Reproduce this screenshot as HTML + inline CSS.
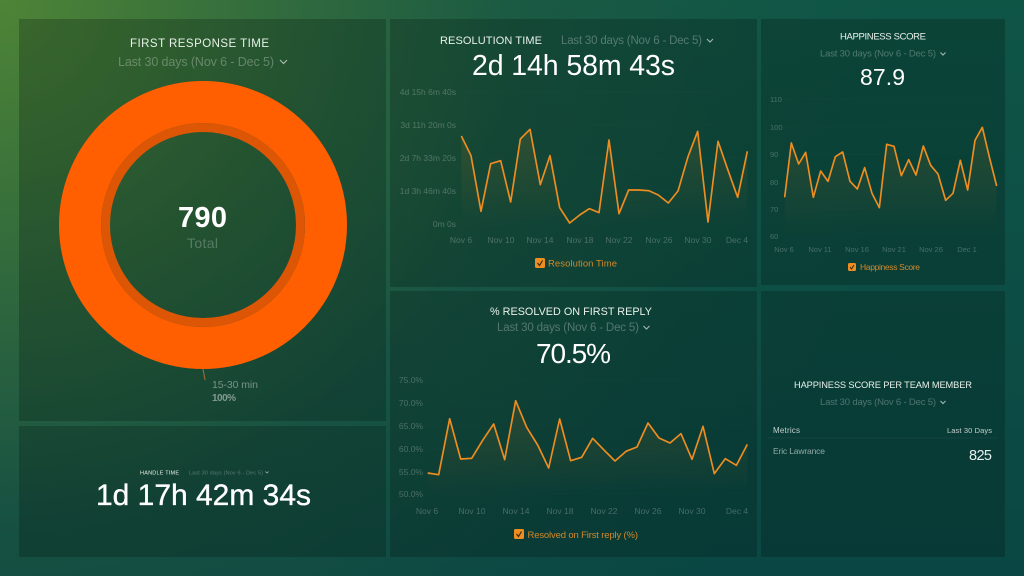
<!DOCTYPE html>
<html lang="en"><head><meta charset="utf-8"><title>Dashboard</title>
<style>
html,body{margin:0;padding:0;width:1024px;height:576px;overflow:hidden;background:#0d4541}
body{background:radial-gradient(circle at 0 0,rgba(78,132,54,1) 0,rgba(70,120,56,.6) 290px,rgba(60,105,60,.26) 520px,rgba(60,105,60,.06) 760px,rgba(60,105,60,0) 900px),linear-gradient(180deg,#0f5546,#0a4744)}
svg{display:block;font-family:"Liberation Sans",sans-serif}
svg.root{filter:blur(.25px)}
.t{fill:#e8f1ea}
.s{fill:rgba(255,255,255,.28)}
.a{fill:rgba(255,255,255,.24)}
.v{fill:#fff}
.l{fill:#d4882a}
.ch{fill:none;stroke:rgba(255,255,255,.6);stroke-width:1.2}
.g{stroke:rgba(255,255,255,.012);stroke-width:1}
.p{fill:none;stroke:#ee8d20;stroke-width:5;stroke-linejoin:round}
.box{fill:rgba(0,12,8,.23)}
</style></head><body>
<svg class="root" width="1024" height="576" viewBox="0 0 1024 576" xmlns="http://www.w3.org/2000/svg">
<defs>
<linearGradient id="ar" x1="0" y1="0" x2="0" y2="1"><stop offset="0" stop-color="#f18e1c" stop-opacity=".13"/><stop offset="1" stop-color="#f18e1c" stop-opacity="0"/></linearGradient>
</defs>
<rect class="box" x="19" y="19" width="367" height="402"/>
<rect class="box" x="19" y="426" width="367" height="131"/>
<rect class="box" x="390" y="19" width="367" height="268"/>
<rect class="box" x="390" y="291" width="367" height="266"/>
<rect class="box" x="761" y="19" width="244" height="266"/>
<rect class="box" x="761" y="291" width="244" height="266"/>

<!-- First response -->
<text class="t" x="130" y="47" font-size="11.500" textLength="139">FIRST RESPONSE TIME</text>
<text class="s" x="118" y="66" font-size="12.500" textLength="156">Last 30 days (Nov 6 - Dec 5)</text>
<polyline class="ch" points="280,60 283.500,63.500 287,60"/>
<circle cx="203" cy="225" r="123" fill="none" stroke="#ff5f00" stroke-width="42"/>
<circle cx="203" cy="225" r="97.500" fill="none" stroke="#dd5606" stroke-width="9"/>
<text class="v" x="178" y="227" font-size="29" font-weight="700" textLength="49">790</text>
<text class="a" x="187" y="248" font-size="14" textLength="31">Total</text>
<line x1="203" y1="369" x2="205" y2="380" stroke="#a8703a" stroke-width="1"/>
<text class="s" x="212" y="388" font-size="10.500" textLength="46" style="fill:rgba(255,255,255,.4)">15-30 min</text>
<text class="s" x="212" y="401" font-size="10" font-weight="700" textLength="24" style="fill:rgba(255,255,255,.45)">100%</text>

<!-- Handle time -->
<text class="t" x="140" y="474.500" font-size="5.500" textLength="39">HANDLE TIME</text>
<text class="s" x="189" y="474.500" font-size="5.500" textLength="74">Last 30 days (Nov 6 - Dec 5)</text>
<polyline class="ch" points="265.500,471.500 267,473 268.500,471.500" style="stroke-width:.8"/>
<text class="v" x="96" y="505" font-size="30" textLength="215" stroke="#fff" stroke-width=".35">1d 17h 42m 34s</text>

<!-- Resolution time -->
<text class="t" x="440" y="44" font-size="11" textLength="102">RESOLUTION TIME</text>
<text class="s" x="561" y="44" font-size="11.500" textLength="141">Last 30 days (Nov 6 - Dec 5)</text>
<polyline class="ch" points="707,39 710,42 713,39"/>
<text class="v" x="472" y="75" font-size="28.500" textLength="203">2d 14h 58m 43s</text>
<g class="g"><line x1="461" x2="748" y1="92" y2="92"/><line x1="461" x2="748" y1="125" y2="125"/><line x1="461" x2="748" y1="158" y2="158"/><line x1="461" x2="748" y1="191" y2="191"/><line x1="461" x2="748" y1="224" y2="224"/></g>
<g class="a" font-size="8.500" text-anchor="end">
<text x="456" y="95">4d 15h 6m 40s</text><text x="456" y="128">3d 11h 20m 0s</text><text x="456" y="161">2d 7h 33m 20s</text><text x="456" y="194">1d 3h 46m 40s</text><text x="456" y="227">0m 0s</text></g>
<g class="a" font-size="8.500" text-anchor="middle">
<text x="461" y="243">Nov 6</text><text x="501" y="243">Nov 10</text><text x="540" y="243">Nov 14</text><text x="580" y="243">Nov 18</text><text x="619" y="243">Nov 22</text><text x="659" y="243">Nov 26</text><text x="698" y="243">Nov 30</text><text x="737" y="243">Dec 4</text></g>
<svg x="390" y="20" width="370" height="265" viewBox="0 0 1110 795">
<polygon fill="url(#ar)" points="214,612 214,348 243,407 273,574 302,431 332,422 362,546 391,357 420,328 451,494 480,407 509,563 539,609 569,585 598,566 627,578 657,360 687,581 716,510 746,510 776,512 805,525 835,549 864,513 894,410 923,334 954,606 984,364 1013,448 1043,532 1072,394 1072,612"/>
<polyline class="p" points="214,348 243,407 273,574 302,431 332,422 362,546 391,357 420,328 451,494 480,407 509,563 539,609 569,585 598,566 627,578 657,360 687,581 716,510 746,510 776,512 805,525 835,549 864,513 894,410 923,334 954,606 984,364 1013,448 1043,532 1072,394"/>
</svg>
<rect x="535" y="258" width="10" height="10" rx="1.500" fill="#ee8d20"/><polyline points="537.500,263 539.500,265.500 542.500,260.500" fill="none" stroke="#3a2a10" stroke-width="1.200"/>
<text class="l" x="548" y="266.500" font-size="9.500" textLength="69">Resolution Time</text>

<!-- Percent -->
<text class="t" x="490" y="315" font-size="10.800" textLength="162">% RESOLVED ON FIRST REPLY</text>
<text class="s" x="497" y="331" font-size="11.500" textLength="142">Last 30 days (Nov 6 - Dec 5)</text>
<polyline class="ch" points="643.500,326 646.500,329 649.500,326"/>
<text class="v" x="536" y="363" font-size="28" textLength="75">70.5%</text>
<g class="g"><line x1="428" x2="748" y1="380" y2="380"/><line x1="428" x2="748" y1="403" y2="403"/><line x1="428" x2="748" y1="426" y2="426"/><line x1="428" x2="748" y1="449" y2="449"/><line x1="428" x2="748" y1="472" y2="472"/><line x1="428" x2="748" y1="494" y2="494"/></g>
<g class="a" font-size="8.500" text-anchor="end">
<text x="423" y="383">75.0%</text><text x="423" y="406">70.0%</text><text x="423" y="429">65.0%</text><text x="423" y="452">60.0%</text><text x="423" y="475">55.0%</text><text x="423" y="497">50.0%</text></g>
<g class="a" font-size="8.500" text-anchor="middle">
<text x="427" y="514">Nov 6</text><text x="472" y="514">Nov 10</text><text x="516" y="514">Nov 14</text><text x="560" y="514">Nov 18</text><text x="604" y="514">Nov 22</text><text x="648" y="514">Nov 26</text><text x="692" y="514">Nov 30</text><text x="737" y="514">Dec 4</text></g>
<svg x="390" y="290" width="370" height="265" viewBox="0 0 1110 795">
<polygon fill="url(#ar)" points="113,612 113,549 146,554 179,386 212,507 245,505 278,451 311,402 344,509 377,332 410,412 443,465 476,534 509,387 542,512 575,502 608,445 641,479 675,513 708,484 741,471 774,399 807,444 840,459 873,431 906,508 939,409 973,551 1006,506 1039,526 1072,463 1072,612"/>
<polyline class="p" points="113,549 146,554 179,386 212,507 245,505 278,451 311,402 344,509 377,332 410,412 443,465 476,534 509,387 542,512 575,502 608,445 641,479 675,513 708,484 741,471 774,399 807,444 840,459 873,431 906,508 939,409 973,551 1006,506 1039,526 1072,463"/>
</svg>
<rect x="514" y="529" width="10" height="10" rx="1.500" fill="#ee8d20"/><polyline points="516.500,534 518.500,536.500 521.500,531.500" fill="none" stroke="#3a2a10" stroke-width="1.200"/>
<text class="l" x="527.500" y="538" font-size="9.500" textLength="110.500">Resolved on First reply (%)</text>

<!-- Happiness -->
<text class="t" x="840" y="39.500" font-size="9.500" textLength="86">HAPPINESS SCORE</text>
<text class="s" x="820" y="56.500" font-size="9.500" textLength="116">Last 30 days (Nov 6 - Dec 5)</text>
<polyline class="ch" points="940.500,52.500 943,55 945.500,52.500"/>
<text class="v" x="860" y="85" font-size="23" textLength="45">87.9</text>
<g class="g"><line x1="784" x2="997" y1="99" y2="99"/><line x1="784" x2="997" y1="127" y2="127"/><line x1="784" x2="997" y1="154" y2="154"/><line x1="784" x2="997" y1="182" y2="182"/><line x1="784" x2="997" y1="209" y2="209"/><line x1="784" x2="997" y1="236" y2="236"/></g>
<g class="a" font-size="7.500">
<text x="770" y="102">110</text><text x="770" y="130">100</text><text x="770" y="157">90</text><text x="770" y="185">80</text><text x="770" y="212">70</text><text x="770" y="239">60</text></g>
<g class="a" font-size="7.500" text-anchor="middle">
<text x="784" y="252">Nov 6</text><text x="820" y="252">Nov 11</text><text x="857" y="252">Nov 16</text><text x="894" y="252">Nov 21</text><text x="931" y="252">Nov 26</text><text x="967" y="252">Dec 1</text></g>
<svg x="760" y="20" width="264" height="265" viewBox="0 0 792 795">
<polygon fill="url(#ar)" points="74,650 74,532 94,369 116,432 137,397 160,532 182,453 204,484 226,410 248,396 270,484 292,507 314,443 336,520 358,563 380,373 402,379 424,467 446,419 468,465 490,378 512,436 534,462 557,541 579,520 601,421 623,510 645,361 667,322 689,415 710,498 710,650"/>
<polyline class="p" points="74,532 94,369 116,432 137,397 160,532 182,453 204,484 226,410 248,396 270,484 292,507 314,443 336,520 358,563 380,373 402,379 424,467 446,419 468,465 490,378 512,436 534,462 557,541 579,520 601,421 623,510 645,361 667,322 689,415 710,498"/>
</svg>
<rect x="848" y="263" width="8" height="8" rx="1.500" fill="#ee8d20"/><polyline points="850,267 851.500,269 854,265" fill="none" stroke="#3a2a10" stroke-width="1"/>
<text class="l" x="860" y="270" font-size="8.500" textLength="60">Happiness Score</text>

<!-- Table -->
<text class="t" x="794" y="388" font-size="9.300" textLength="178">HAPPINESS SCORE PER TEAM MEMBER</text>
<text class="s" x="820" y="405" font-size="9.500" textLength="116">Last 30 days (Nov 6 - Dec 5)</text>
<polyline class="ch" points="940.500,401 943,403.500 945.500,401"/>
<text x="773" y="433" font-size="8" textLength="27" fill="rgba(255,255,255,.75)">Metrics</text>
<text x="947" y="433" font-size="7.500" textLength="45" fill="rgba(255,255,255,.75)">Last 30 Days</text>
<line x1="768" x2="998" y1="438" y2="438" stroke="rgba(255,255,255,.05)"/>
<text x="773" y="454" font-size="8.500" textLength="52" fill="rgba(255,255,255,.55)">Eric Lawrance</text>
<text x="969" y="460" font-size="14.500" textLength="23" fill="#e8f0ee">825</text>
</svg>
</body></html>
